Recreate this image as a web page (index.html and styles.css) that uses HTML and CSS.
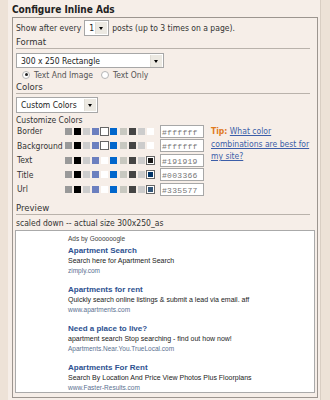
FILE: index.html
```html
<!DOCTYPE html>
<html>
<head>
  <meta charset='utf-8'>
  <title>Configure Inline Ads</title>
  <link rel="stylesheet" href="styles.css">
</head>
<body>
  <div class="wrap">
    <div class="title">Configure Inline Ads</div>

    <div class="box">
      <div class="row every">
        <span>Show after every</span>
        <div class="select small"><span class="val">1</span><span class="arrow"></span></div>
        <span>posts (up to 3 times on a page).</span>
      </div>

      <div class="head">Format</div>
      <div class="select format"><span class="val">300 x 250 Rectangle</span><span class="arrow"></span></div>
      <div class="row radios">
        <span class="radio on"></span><span>Text And Image</span>
        <span class="radio"></span><span>Text Only</span>
      </div>

      <div class="head">Colors</div>
      <div class="select custom"><span class="val">Custom Colors</span><span class="arrow"></span></div>
      <div class="sub">Customize Colors</div>

      <div class="colors">
        <div class="rows">
          <div class="crow">
            <span class="label">Border</span>
            <div class="swatches">
              <i style="background:#999"></i><i style="background:#000"></i><i style="background:#ccc"></i><i style="background:#6b7fbf"></i><i class="sel" style="background:#fff"></i><i style="background:#0066cc"></i><i style="background:#c8c8c0"></i><i style="background:#444"></i><i style="background:#ccc"></i><i style="background:#fff"></i>
            </div>
            <span class="hex">#ffffff</span>
          </div>
          <div class="crow">
            <span class="label">Background</span>
            <div class="swatches">
              <i style="background:#999"></i><i style="background:#000"></i><i style="background:#ccc"></i><i style="background:#6b7fbf"></i><i class="sel" style="background:#fff"></i><i style="background:#0066cc"></i><i style="background:#c8c8c0"></i><i style="background:#444"></i><i style="background:#ccc"></i><i style="background:#fff"></i>
            </div>
            <span class="hex">#ffffff</span>
          </div>
          <div class="crow">
            <span class="label">Text</span>
            <div class="swatches">
              <i style="background:#999"></i><i style="background:#000"></i><i style="background:#ccc"></i><i style="background:#6b7fbf"></i><i style="background:#fff"></i><i style="background:#0066cc"></i><i style="background:#c8c8c0"></i><i style="background:#444"></i><i style="background:#ccc"></i><i class="sel" style="background:#191919"></i>
            </div>
            <span class="hex">#191919</span>
          </div>
          <div class="crow">
            <span class="label">Title</span>
            <div class="swatches">
              <i style="background:#999"></i><i style="background:#000"></i><i style="background:#ccc"></i><i style="background:#6b7fbf"></i><i style="background:#fff"></i><i style="background:#0066cc"></i><i style="background:#c8c8c0"></i><i style="background:#444"></i><i style="background:#ccc"></i><i class="sel" style="background:#003366"></i>
            </div>
            <span class="hex">#003366</span>
          </div>
          <div class="crow">
            <span class="label">Url</span>
            <div class="swatches">
              <i style="background:#999"></i><i style="background:#000"></i><i style="background:#ccc"></i><i style="background:#6b7fbf"></i><i style="background:#fff"></i><i style="background:#0066cc"></i><i style="background:#c8c8c0"></i><i style="background:#444"></i><i style="background:#ccc"></i><i class="sel" style="background:#335577"></i>
            </div>
            <span class="hex">#335577</span>
          </div>
        </div>
        <div class="tip">
          <div><span class="tip-label">Tip:</span> <a href="#">What color</a></div>
          <div><a href="#">combinations are best for</a></div>
          <div><a href="#">my site?</a></div>
        </div>
      </div>

      <div class="head preview-head">Preview</div>
      <div class="scaled">scaled down -- actual size 300x250_as</div>

      <div class="preview">
        <div class="adsby">Ads by Goooooogle</div>
        <div class="ad">
          <div class="ad-title">Apartment Search</div>
          <div class="ad-text">Search here for Apartment Search</div>
          <div class="ad-url">zimply.com</div>
        </div>
        <div class="ad">
          <div class="ad-title">Apartments for rent</div>
          <div class="ad-text">Quickly search online listings &amp; submit a lead via email. aff</div>
          <div class="ad-url">www.apartments.com</div>
        </div>
        <div class="ad">
          <div class="ad-title">Need a place to live?</div>
          <div class="ad-text">apartment search Stop searching - find out how now!</div>
          <div class="ad-url">Apartments.Near.You.TrueLocal.com</div>
        </div>
        <div class="ad">
          <div class="ad-title">Apartments For Rent</div>
          <div class="ad-text">Search By Location And Price View Photos Plus Floorplans</div>
          <div class="ad-url">www.Faster-Results.com</div>
        </div>
      </div>
    </div>
  </div>
</body>
</html>
```

FILE: styles.css
```css
html, body {
  margin: 0;
  height: 100%;
}

body {
  background-color: #ede2d7;
  color: #333;
  font-family: "DejaVu Sans Condensed", "DejaVu Sans", sans-serif;
  font-size: 8.5px;
}

.wrap {
  margin-left: 8px;
  width: 312px;
  min-height: 400px;
  background-color: #f6eee8;
  border-right: 1px solid #d9cec3;
}

.title {
  height: 17px;
  line-height: 20px;
  padding-left: 4px;
  font-size: 10px;
  font-weight: bold;
  color: #222;
}

.box {
  margin-left: 4px;
  width: 298px;
  border: 1px solid #9c958f;
  padding: 1px 3px 4px 3px;
}

.row {
  display: flex;
  align-items: center;
}

.every {
  height: 17px;
  gap: 3px;
}

/* fake select boxes */
.select {
  display: flex;
  align-items: center;
  background: #fff;
  border: 1px solid #a7a7a7;
  box-sizing: border-box;
  padding-left: 4px;
  color: #222;
}

.select .val {
  flex: 1;
}

.select .arrow {
  position: relative;
  width: 11px;
  height: 12px;
  margin-right: 1px;
  background: #ece9e2;
  border-left: 1px solid #e0ddd6;
}

.select .arrow::after {
  content: "";
  position: absolute;
  left: 3px;
  top: 5px;
  border-left: 2.5px solid transparent;
  border-right: 2.5px solid transparent;
  border-top: 3px solid #000;
}

.select.small {
  width: 25px;
  height: 16px;
}

.select.format {
  width: 148px;
  height: 15px;
  margin-top: 4px;
}

.select.custom {
  width: 82px;
  height: 16px;
  margin-top: 3px;
}

.head {
  margin-right: 4px;
  height: 12px;
  line-height: 12px;
  font-size: 9.5px;
  border-bottom: 1px solid #b9b2ab;
  color: #333;
}

.preview-head {
  margin-top: 5px;
}

.radios {
  height: 13px;
  padding-left: 6px;
  color: #555;
}

.radio {
  width: 6px;
  height: 6px;
  border-radius: 50%;
  border: 1px solid #b5b5b5;
  background: #fff;
  margin-right: 4px;
  position: relative;
}

.radio + span {
  margin-right: 8px;
}

.radio.on::after {
  content: "";
  position: absolute;
  left: 1.5px;
  top: 1.5px;
  width: 3px;
  height: 3px;
  border-radius: 50%;
  background: #222;
}

.sub {
  height: 11px;
  line-height: 14px;
}

.colors {
  display: flex;
}

.rows {
  width: 192px;
}

.crow {
  display: flex;
  align-items: center;
  height: 14.5px;
}

.label {
  width: 48px;
  padding-left: 1px;
}

.swatches {
  display: flex;
  width: 95px;
}

.swatches i {
  display: block;
  width: 7px;
  height: 7px;
  margin-right: 2.1px;
}

.swatches i.sel {
  width: 9px;
  height: 9px;
  margin: -1px 1.1px -1px -1px;
  border: 1px solid #666;
  box-sizing: border-box;
  box-shadow: inset 0 0 0 1px #fff;
}

.hex {
  display: block;
  width: 44px;
  height: 13px;
  line-height: 13px;
  box-sizing: border-box;
  border: 1px solid #a7a7a7;
  background: #fff;
  padding-left: 1px;
  font-family: "Liberation Mono", monospace;
  font-size: 8px;
  color: #777;
  letter-spacing: 0.3px;
}

.tip {
  padding-left: 3px;
  padding-top: 1px;
  line-height: 12.5px;
  font-size: 8.5px;
}

.tip-label {
  color: #e07a1e;
  font-weight: bold;
}

.tip a {
  color: #3c5ea8;
}

.scaled {
  height: 15px;
  line-height: 16px;
  font-size: 8.5px;
  color: #333;
}

.preview {
  margin-left: -1px;
  width: 300px;
  height: 163px;
  box-sizing: border-box;
  border: 1px solid #aaa;
  background: #fff;
  padding: 3px 0 0 52px;
  font-family: "Liberation Sans", Arial, sans-serif;
}

.adsby {
  font-size: 6.5px;
  color: #444;
  height: 11px;
  line-height: 10px;
}

.ad {
  height: 39px;
}

.ad-title {
  font-size: 8px;
  font-weight: bold;
  color: #2d5190;
  line-height: 11px;
}

.ad-text {
  font-size: 7px;
  color: #222;
  line-height: 10px;
}

.ad-url {
  font-size: 6.5px;
  color: #5a7090;
  line-height: 10px;
}
```
